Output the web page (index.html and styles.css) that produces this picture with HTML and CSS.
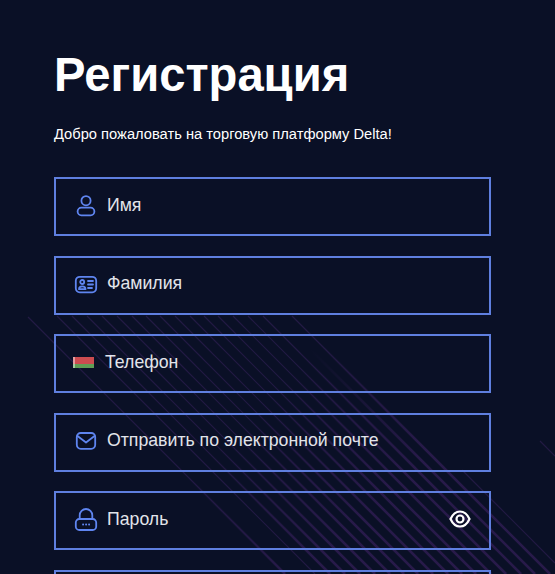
FILE: index.html
```html
<!DOCTYPE html>
<html lang="ru">
<head>
<meta charset="utf-8">
<title>Регистрация</title>
<link rel="stylesheet" href="styles.css">
</head>
<body>
<svg class="stripes" width="555" height="574" viewBox="0 0 555 574" aria-hidden="true">
  <defs>
    <linearGradient id="fade" gradientUnits="userSpaceOnUse" x1="330" y1="330" x2="440" y2="440">
      <stop offset="0" stop-color="#281a4a" stop-opacity="0"/>
      <stop offset="1" stop-color="#281a4a"/>
    </linearGradient>
  </defs>
  <g class="stripes-thin">
    <path d="M28 317L285 574"/><path d="M57 316L315 574"/><path d="M72 316L330 574"/><path d="M87 316L345 574"/><path d="M102 316L360 574"/><path d="M117 316L375 574"/><path d="M132 316L390 574"/><path d="M146 316L404 574"/><path d="M160 316L418 574"/><path d="M175 316L433 574"/><path d="M190 316L448 574"/><path d="M204 316L462 574"/><path d="M218 316L476 574"/><path d="M233 316L491 574"/><path d="M248 316L506 574"/><path d="M263 316L521 574"/><path d="M292 316L550 574"/>
    <path d="M462 470L555 563"/><path d="M540 441L555 456"/>
  </g>
  <g class="stripes-wide" stroke="url(#fade)">
    <path d="M28 317L285 574"/><path d="M72 316L330 574"/><path d="M87 316L345 574"/><path d="M102 316L360 574"/><path d="M117 316L375 574"/><path d="M132 316L390 574"/><path d="M146 316L404 574"/><path d="M160 316L418 574"/><path d="M175 316L433 574"/><path d="M190 316L448 574"/><path d="M204 316L462 574"/><path d="M218 316L476 574"/><path d="M233 316L491 574"/><path d="M248 316L506 574"/><path d="M263 316L521 574"/><path d="M277 316L535 574"/><path d="M292 316L550 574"/>
  </g>
</svg>
<main class="page">
  <h1 class="title">Регистрация</h1>
  <p class="subtitle">Добро пожаловать на торговую платформу Delta!</p>
  <form class="form">
    <label class="field">
      <svg class="icon" width="24" height="24" viewBox="0 0 24 24"><circle cx="12" cy="7.700" r="4.600"/><rect x="3.600" y="14.700" width="16.800" height="7.600" rx="3.800"/></svg>
      <span>Имя</span>
    </label>
    <label class="field">
      <svg class="icon" width="24" height="24" viewBox="0 0 24 24"><rect x="1.800" y="4.800" width="20.400" height="15.500" rx="4"/><circle cx="8.200" cy="10" r="2"/><path d="M5 17.200c0-3.800 6.500-3.800 6.500 0zM14 9h5M14 12.500h5M14 16h4"/></svg>
      <span>Фамилия</span>
    </label>
    <label class="field field-phone">
      <span class="flag"></span>
      <span>Телефон</span>
    </label>
    <label class="field">
      <svg class="icon" width="24" height="24" viewBox="0 0 24 24"><rect x="2.800" y="4" width="18.400" height="15.800" rx="4"/><path d="M3.500 7l8.500 6.500L20.500 7"/></svg>
      <span>Отправить по электронной почте</span>
    </label>
    <label class="field">
      <svg class="icon" width="24" height="24" viewBox="0 0 24 24"><rect x="1.800" y="12" width="20.400" height="11" rx="3.500"/><path d="M5.700 12V8.300a6.300 6.300 0 0 1 12.600 0V12"/><path class="icon-dots" d="M9 17.500h.2M12 17.500h.2M15 17.500h.2"/></svg>
      <span>Пароль</span>
      <svg class="eye" width="24" height="24" viewBox="0 0 24 24"><path d="M2.500 12C4.800 7 8.200 4.500 12 4.500s7.200 2.500 9.500 7.500c-2.300 5-5.700 7.500-9.500 7.500S4.800 17 2.500 12z"/><circle cx="12" cy="12" r="3.500"/></svg>
    </label>
    <label class="field"></label>
  </form>
</main>
</body>
</html>
```
FILE: styles.css
```css
html, body {
  margin: 0;
  height: 574px;
  overflow: hidden;
}
body {
  position: relative;
  background: #0a1026;
  color: #fff;
  font-family: "Liberation Sans", Arial, sans-serif;
}
.stripes {
  position: absolute;
  left: 0;
  top: 0;
}
.stripes-thin {
  fill: none;
  stroke: #231a44;
  stroke-width: 1.2;
}
.stripes-wide {
  fill: none;
  stroke-width: 2.6;
}
.page {
  position: relative;
  height: 574px;
  box-sizing: border-box;
  padding: 47px 64px 0 54px;
}
.title {
  margin: 0;
  font-size: 47.2px;
  line-height: 55px;
  font-weight: 700;
}
.subtitle {
  margin: 24px 0 0;
  font-size: 14.7px;
  line-height: 17px;
}
.form {
  display: flex;
  flex-direction: column;
  gap: 19.5px;
  margin-top: 34px;
}
.field {
  box-sizing: border-box;
  display: flex;
  align-items: center;
  flex: none;
  gap: 9px;
  height: 59px;
  padding: 0 17px 3px 18px;
  border: 2px solid #5f7fdf;
  font-size: 17.7px;
  color: #e2e4ea;
}
.field-phone {
  gap: 11px;
  padding-left: 17px;
}
.icon {
  flex: none;
  fill: none;
  stroke: #5f85f0;
  stroke-width: 1.8;
  stroke-linecap: round;
  stroke-linejoin: round;
}
.eye {
  flex: none;
  margin-left: auto;
  fill: none;
  stroke: #fff;
  stroke-width: 2.2;
}
.flag {
  flex: none;
  width: 21px;
  height: 11px;
  background:
    linear-gradient(90deg, rgba(255, 255, 255, 0.45) 0 2px, transparent 2px),
    linear-gradient(#cc4c50 0 66%, #5f9e55 66%);
}
```
